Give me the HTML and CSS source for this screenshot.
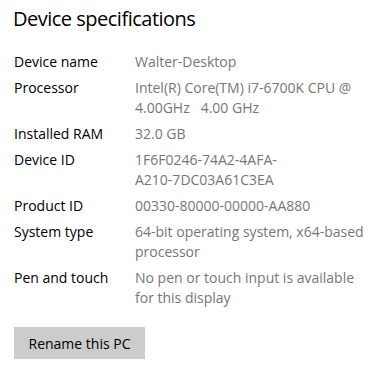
FILE: index.html
```html
<!DOCTYPE html>
<html lang="en">
<head>
    <meta charset="UTF-8">
    <meta name="viewport" content="width=device-width, initial-scale=1.0">
    <title>Device specifications</title>
    <link rel="stylesheet" href="styles.css">
</head>
<body>
    <section class="specs">
        <h1 class="specs-title">Device specifications</h1>

        <dl class="spec-list">
            <dt>Device name</dt>
            <dd>Walter-Desktop</dd>

            <dt>Processor</dt>
            <dd>Intel(R) Core(TM) i7-6700K CPU @<br>4.00GHz&nbsp;&nbsp;&nbsp;4.00 GHz</dd>

            <dt>Installed RAM</dt>
            <dd>32.0 GB</dd>

            <dt>Device ID</dt>
            <dd>1F6F0246-74A2-4AFA-<br>A210-7DC03A61C3EA</dd>

            <dt>Product ID</dt>
            <dd>00330-80000-00000-AA880</dd>

            <dt>System type</dt>
            <dd>64-bit operating system, x64-based<br>processor</dd>

            <dt>Pen and touch</dt>
            <dd>No pen or touch input is available<br>for this display</dd>
        </dl>

        <button class="rename-button">Rename this PC</button>
    </section>
</body>
</html>
```

FILE: styles.css
```css
body {
    margin: 0;
    background-color: #ffffff;
    font-family: "Open Sans", "Noto Sans", Arial, sans-serif;
    color: #000000;
}

.specs {
    padding: 4px 14px 0 14px;
}

.specs-title {
    margin: 0 0 0 -1px;
    font-size: 20px;
    font-weight: 400;
    line-height: 30px;
    letter-spacing: -0.5px;
    color: #000000;
}

.spec-list {
    display: grid;
    grid-template-columns: 121px 1fr;
    row-gap: 6px;
    margin: 18px 0 0 0;
    font-size: 14px;
    line-height: 20px;
}

.spec-list dt {
    color: #000000;
    white-space: nowrap;
}

.spec-list dd {
    margin: 0;
    color: #767676;
    white-space: nowrap;
}

.rename-button {
    margin-top: 19px;
    width: 131px;
    height: 32px;
    padding: 0;
    font-family: inherit;
    font-size: 14px;
    color: #000000;
    background-color: #cccccc;
    border: none;
    cursor: pointer;
}
```
